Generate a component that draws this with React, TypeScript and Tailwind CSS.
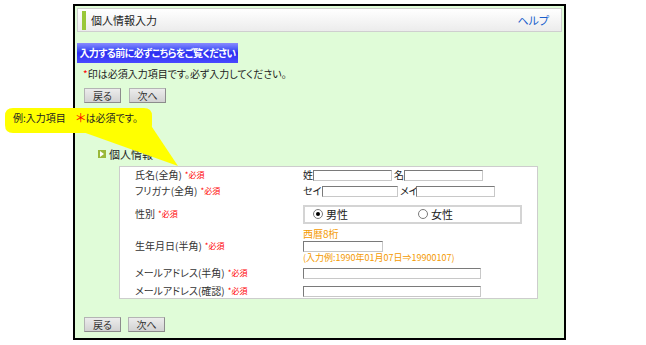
const jp = "font-['Noto_Sans_CJK_JP','Noto_Sans',sans-serif] [font-feature-settings:'palt']";

function Btn({ label }: { label: string }) {
  return (
    <button className="flex h-[15px] w-[37px] items-center justify-center border border-[#8c8c8c] border-t-[#b4b4b4] border-l-[#b4b4b4] bg-gradient-to-b from-[#ececec] to-[#d2d2d2] text-[10px] leading-none text-[#333]">
      {label}
    </button>
  );
}

function Req() {
  return <span className="ml-[3px] text-[8px] leading-none whitespace-nowrap text-[#ff0000]">*必須</span>;
}

function Field({ w }: { w: number }) {
  const widths: Record<number, string> = {
    76: "w-[76px]",
    79: "w-[79px]",
    80: "w-[80px]",
    178: "w-[178px]",
  };
  return (
    <div
      className={`h-[11px] shrink-0 ${widths[w]} border border-[#7a7a7a] border-r-[#c8c8c8] border-b-[#c8c8c8] bg-white`}
    />
  );
}

function Radio({ checked }: { checked?: boolean }) {
  return (
    <span className="flex h-[10px] w-[10px] shrink-0 items-center justify-center rounded-full border border-[#7a7a7a] bg-white">
      {checked && <span className="h-[4px] w-[4px] rounded-full bg-black" />}
    </span>
  );
}

function Row({ label, h, mt, children }: { label: string; h: string; mt: string; children: React.ReactNode }) {
  return (
    <div className={`flex items-center ${h} ${mt}`}>
      <div className="flex w-[168px] shrink-0 items-center text-[10px] leading-none whitespace-nowrap text-[#333]">
        {label}
        <Req />
      </div>
      {children}
    </div>
  );
}

export default function App() {
  return (
    <div className={`relative h-[345px] w-[646px] bg-white pt-[4px] pl-[73px] ${jp}`}>
      {/* frame */}
      <div className="h-[336px] w-[493px] border-2 border-black bg-[#e0fcd8] px-[2px] pt-[2px]">
        {/* title bar */}
        <div className="flex h-[24px] items-center justify-between border border-[#cfcfcf] bg-gradient-to-b from-white to-[#ececec] pr-[12px] pl-[4px]">
          <div className="flex items-center">
            <span className="h-[19px] w-[4px] bg-[#99c738]" />
            <span className="ml-[5px] text-[11px] leading-none text-[#222]">個人情報入力</span>
          </div>
          <span className="text-[11px] leading-none text-[#1a5fcc]">ヘルプ</span>
        </div>

        {/* banner */}
        <div className="mt-[11px] flex h-[20px] w-[161px] items-center justify-center bg-gradient-to-b from-[#8a8aff] via-[#2b2bf0] to-[#4a4aff] text-[10px] font-bold leading-none tracking-[-0.6px] whitespace-nowrap text-white">
          入力する前に必ずこちらをご覧ください
        </div>

        <div className="mt-[5px] ml-[6px] flex h-[12px] items-center text-[10px] leading-none whitespace-nowrap text-[#222]">
          <span className="text-[#ff0000]">*</span>印は必須入力項目です。必ず入力してください。
        </div>

        <div className="mt-[8px] ml-[7px] flex gap-[8px]">
          <Btn label="戻る" />
          <Btn label="次へ" />
        </div>

        {/* section heading */}
        <div className="mt-[45px] ml-[21px] flex h-[12px] items-center">
          <span className="flex h-[8px] w-[8px] items-center justify-center bg-[#9ab83a]">
            <svg width="4" height="6" viewBox="0 0 4 6">
              <path d="M0 0 L4 3 L0 6 Z" fill="#fff" />
            </svg>
          </span>
          <span className="ml-[3px] text-[11px] leading-none text-[#222]">個人情報</span>
        </div>

        {/* form */}
        <div className="mt-[6px] ml-[42px] w-[419px] border border-[#cdcdcd] bg-white pb-[1px] pl-[15px]">
          <Row label="氏名(全角)" h="h-[16px]" mt="">
            <div className="flex items-center text-[10px] leading-none whitespace-nowrap text-[#222]">
              <span className="w-[10px] shrink-0">姓</span>
              <Field w={79} />
              <span className="ml-[2px] w-[10px] shrink-0">名</span>
              <Field w={79} />
            </div>
          </Row>
          <Row label="フリガナ(全角)" h="h-[16px]" mt="">
            <div className="flex items-center text-[10px] leading-none whitespace-nowrap text-[#222]">
              <span className="w-[19px] shrink-0">セイ</span>
              <Field w={76} />
              <span className="ml-[2px] w-[16px] shrink-0">メイ</span>
              <Field w={79} />
            </div>
          </Row>
          <Row label="性別" h="h-[22px]" mt="mt-[4px]">
            <div className="flex h-[19px] w-[219px] items-center border-2 border-[#d4d4d4] pl-[8px] text-[11px] leading-none text-[#222]">
              <Radio checked />
              <span className="ml-[3px] w-[92px]">男性</span>
              <Radio />
              <span className="ml-[3px]">女性</span>
            </div>
          </Row>
          <Row label="生年月日(半角)" h="h-[35px]" mt="mt-[3px]">
            <div className="flex flex-col text-[10px] leading-none whitespace-nowrap text-[#f49a00]">
              <span className="flex h-[12px] items-center">西暦8桁</span>
              <div className="mt-[1px]">
                <Field w={80} />
              </div>
              <span className="flex h-[11px] items-center text-[9px]">(入力例:1990年01月07日⇒19900107)</span>
            </div>
          </Row>
          <Row label="メールアドレス(半角)" h="h-[12px]" mt="mt-[4px]">
            <Field w={178} />
          </Row>
          <Row label="メールアドレス(確認)" h="h-[12px]" mt="mt-[6px]">
            <Field w={178} />
          </Row>
        </div>

        <div className="mt-[18px] ml-[7px] flex gap-[7px]">
          <Btn label="戻る" />
          <Btn label="次へ" />
        </div>
      </div>

      {/* callout */}
      <svg className="absolute left-0 top-[104px]" width="190" height="66" viewBox="0 104 190 66">
        <path d="M13 108 H144 Q152 108 152 116 V125 Q152 133 144 133 H13 Q5 133 5 125 V116 Q5 108 13 108 Z" fill="#ffff00" />
        <polygon points="80,131 150,124 178,166" fill="#ffff00" />
      </svg>
      <div className="absolute left-[13px] top-[111px] flex h-[13px] items-center text-[10px] leading-none whitespace-nowrap text-[#222]">
        例:入力項目<span className="ml-[10px] text-[12px] text-[#ff0000]">＊</span>は必須です。
      </div>
    </div>
  );
}
